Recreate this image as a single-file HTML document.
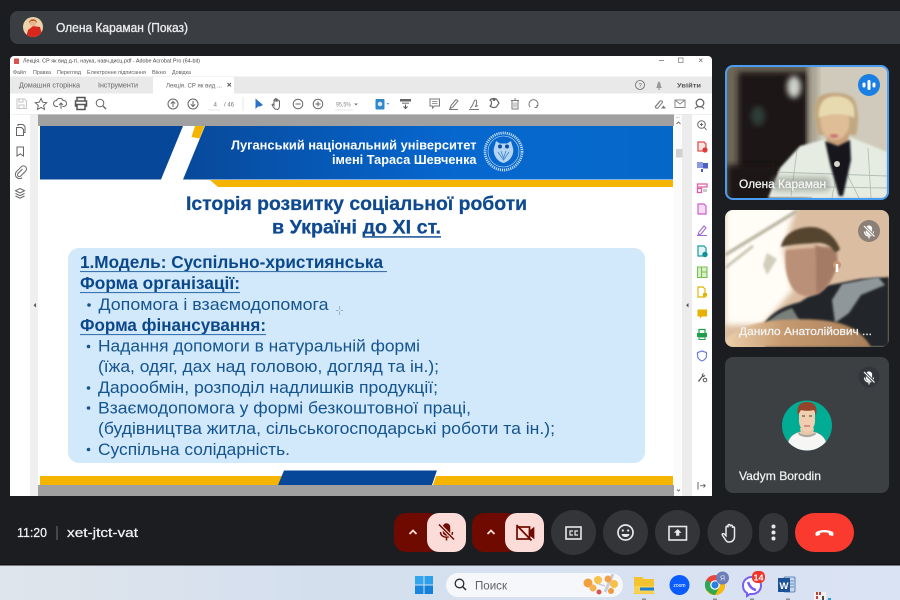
<!DOCTYPE html>
<html lang="uk">
<head>
<meta charset="utf-8">
<title>Google Meet</title>
<style>
html,body{margin:0;padding:0;width:900px;height:600px;overflow:hidden;background:#1c1d21}
svg{display:block;filter:blur(.3px)}
text{font-family:"Liberation Sans","Noto Sans CJK SC",sans-serif}
.b{font-weight:700}
.s{fill:#14548f}
.h{fill:#0a478b;font-weight:700}
.m{fill:#5c5c5c;font-size:5.6px}
.w{fill:#fff}
.ic{fill:none;stroke:#666;stroke-width:1}
</style>
</head>
<body>
<svg width="900" height="600" viewBox="0 0 900 600" xmlns="http://www.w3.org/2000/svg">
<defs>
<filter id="b1" x="-30%" y="-30%" width="160%" height="160%"><feGaussianBlur stdDeviation="1"/></filter>
<filter id="b3" x="-30%" y="-30%" width="160%" height="160%"><feGaussianBlur stdDeviation="3"/></filter>
<filter id="b6" x="-50%" y="-50%" width="200%" height="200%"><feGaussianBlur stdDeviation="6"/></filter>
<clipPath id="t1"><rect x="727" y="67" width="160" height="131" rx="6"/></clipPath>
<clipPath id="t2"><rect x="725" y="210" width="164" height="137" rx="8"/></clipPath>
<clipPath id="av"><circle cx="807" cy="425.500" r="25"/></clipPath>
<clipPath id="av0"><circle cx="33" cy="27" r="10"/></clipPath>
<linearGradient id="hd" x1="0" x2="1" y1="0" y2="0"><stop offset="0" stop-color="#07499a"/><stop offset=".55" stop-color="#0667cf"/><stop offset="1" stop-color="#0568c8"/></linearGradient>
<linearGradient id="tb" x1="0" x2="1" y1="0" y2="0"><stop offset="0" stop-color="#dfe5ec"/><stop offset=".35" stop-color="#d4dfee"/><stop offset="1" stop-color="#dae3f3"/></linearGradient>
<linearGradient id="arm" x1="0" x2="1" y1="0" y2="0"><stop offset="0" stop-color="#ecd0ab"/><stop offset=".4" stop-color="#c69a70"/><stop offset="1" stop-color="#a97f5a"/></linearGradient>
</defs>

<rect width="900" height="600" fill="#1c1d21"/>

<!-- top bar -->
<rect x="10" y="11" width="900" height="33" rx="8" fill="#3a3d41"/>
<circle cx="33" cy="27" r="10" fill="#ecd3ac"/>
<g clip-path="url(#av0)"><path d="M26 38l2-8 5-4 7 1 3 11z" fill="#d8281e"/><circle cx="33" cy="23" r="3.400" fill="#e9b58b"/><path d="M29 23c0-5 8-5 8 0l-2-2h-4z" fill="#b3562a"/></g>
<text x="56" y="32" font-size="12.600" fill="#e9eaec" stroke="#e9eaec" stroke-width=".35" textLength="132" lengthAdjust="spacingAndGlyphs">Олена Караман (Показ)</text>

<!-- PDF window -->
<rect x="10" y="56" width="702" height="440" rx="4" fill="#fff"/>
<rect x="10" y="76.500" width="702" height="17" fill="#e9e9e9"/>
<path d="M153 93.500V79a2 2 0 0 1 2-2h77a2 2 0 0 1 2 2v14.500z" fill="#fff"/>
<rect x="10" y="93.500" width="702" height="21" fill="#fff"/>
<line x1="10" y1="114.500" x2="712" y2="114.500" stroke="#ddd" stroke-width=".8"/>
<path d="M14 58.500h5v5.500h-5z" fill="#d8534c"/>
<text x="23" y="62.500" font-size="5.600" fill="#444" textLength="177" lengthAdjust="spacingAndGlyphs">Лекція. СР як вид д-ті, наука, навч.дисц.pdf - Adobe Acrobat Pro (64-bit)</text>
<path d="M659 60.500h5" stroke="#777" stroke-width=".8"/>
<rect x="678.500" y="58" width="4.500" height="4.500" fill="none" stroke="#888" stroke-width=".8"/>
<path d="M699 58.500l3.500 3.500m0-3.500L699 62" stroke="#777" stroke-width=".8"/>
<text x="13" y="74" class="m" textLength="13" lengthAdjust="spacingAndGlyphs">Файл</text>
<text x="33" y="74" class="m" textLength="18" lengthAdjust="spacingAndGlyphs">Правка</text>
<text x="57" y="74" class="m" textLength="24" lengthAdjust="spacingAndGlyphs">Перегляд</text>
<text x="87" y="74" class="m" textLength="59" lengthAdjust="spacingAndGlyphs">Електронне підписання</text>
<text x="152" y="74" class="m" textLength="14" lengthAdjust="spacingAndGlyphs">Вікно</text>
<text x="172" y="74" class="m" textLength="19" lengthAdjust="spacingAndGlyphs">Довідка</text>
<text x="19" y="87.500" font-size="7" fill="#666" textLength="61" lengthAdjust="spacingAndGlyphs">Домашня сторінка</text>
<text x="98" y="87.500" font-size="7" fill="#666" textLength="40" lengthAdjust="spacingAndGlyphs">Інструменти</text>
<text x="166" y="87.500" font-size="6.200" fill="#666" textLength="56" lengthAdjust="spacingAndGlyphs">Лекція. СР як вид ...</text>
<path d="M227.500 83l3.500 3.500m0-3.500l-3.500 3.500" stroke="#555" stroke-width=".9"/>
<circle cx="640" cy="85" r="4.500" fill="none" stroke="#666" stroke-width=".8"/>
<text x="638.500" y="87.300" font-size="6" fill="#666">?</text>
<path d="M656 88c1.500-1 1-6 3-6.500c2 .5 1.500 5.500 3 6.500zM658 88.500h2v1.200h-2z" fill="#999"/>
<text x="677" y="87.500" font-size="6.800" class="b" fill="#555" textLength="24" lengthAdjust="spacingAndGlyphs">Увійти</text>

<!-- toolbar icons -->
<g class="ic">
<path d="M17 99h7.500l2 2v7.500h-9.500z" stroke="#c5c5c5"/><path d="M19 99v3h4v-3M19 108.500v-3.500h5v3.500" stroke="#c5c5c5"/>
<path d="M41 98.500l1.700 3.700 4 .5-3 2.700.8 4-3.500-2-3.500 2 .8-4-3-2.700 4-.5z"/>
<path d="M58 106.500h-1.500a3 3 0 0 1 0-6c.8-2.700 5.500-3 6.500 0a3 3 0 0 1 1 6h-1.500M61 109v-6m-2 2l2-2 2 2"/>
<path d="M77 101v-3.500h8v3.500M77 106h-1.500v-5h11v5H85M77 104.500h8v5h-8z" stroke-width="1.500" stroke="#555"/>
<circle cx="100" cy="103" r="3.800"/><path d="M103 106l3 3" stroke-width="1.400"/>
<circle cx="173" cy="104" r="5"/><path d="M173 107v-5.500m-2.200 2.200l2.200-2.200 2.200 2.200"/>
<circle cx="193" cy="104" r="5"/><path d="M193 101v5.500m-2.200-2.200l2.200 2.200 2.200-2.200"/>
<circle cx="298" cy="104" r="4.800"/><path d="M295.500 104h5"/>
<circle cx="318" cy="104" r="4.800"/><path d="M315.500 104h5m-2.500-2.500v5"/>
<path d="M275 109c-1.500-1.500-2.500-3-3-4.500.5-1 1.500 0 2 .8v-5.500c1-.7 1.200 0 1.200 2v-3c1-.7 1.300 0 1.300 3v-2.500c1-.6 1.300 0 1.300 2.500v-1.500c1-.5 1.700 0 1.700 1.500v4c0 1.500-.5 3-2 3.700z"/>
<path d="M430 99h9.500v7h-5l-2 2v-2H430z" stroke="#777"/><path d="M432 101.500h5.500M432 103.500h5.500" stroke="#999"/>
<path d="M450 108.500l1-3 5-6 2 1.500-5 6zM449 109.500h9" stroke="#777"/>
<path d="M470 108c3-1 3.500-8 5.500-8s1 5 0 6.500c1 0 1.500-1.500 2.500-.5M469 109.500h10" stroke="#777"/>
<path d="M490 100c2-2 6-2 7 0l2 3-2 3c-1 2-5 2-7 0 2-1 2-5 0-6z" stroke="#666" stroke-width="1.200"/><circle cx="494" cy="99.500" r="1.500" fill="#666" stroke="none"/>
<path d="M511 100.500h8m-7 0v8.500h6v-8.500m-4-1.500h2" stroke="#777"/><path d="M514 102.500v5m2-5v5" stroke="#777" stroke-width=".7"/>
<path d="M530 107a4.500 4.500 0 1 1 7 0M537 107.500v-2.500m0 2.500h-2.500" stroke="#777"/>
<path d="M655 107l5-6c2-1 3 1 2 2l-4 5c-2 1-3-.5-2-2l3.500-4" stroke="#777"/><path d="M661 108.500l2.500-3 2.500 3z" fill="#777" stroke="none"/>
<rect x="675" y="100" width="10" height="7.500" stroke="#888"/><path d="M675 100l5 4 5-4" stroke="#888"/>
<circle cx="700" cy="103" r="3.800" stroke="#666" stroke-width="1.300"/><path d="M695 109c1-3 8-3 9 0" stroke="#666"/>
</g>
<line x1="243" y1="97" x2="243" y2="111" stroke="#e2e2e2" stroke-width=".8"/>
<text x="213.500" y="106.500" font-size="6.200" fill="#777">4</text>
<path d="M208 110h12" stroke="#ddd" stroke-width=".7"/>
<text x="224" y="106.500" font-size="6.200" fill="#777" textLength="10" lengthAdjust="spacingAndGlyphs">/ 46</text>
<path d="M255.500 98.500v10.500l2.500-2.500 2 0 3-1.500z" fill="#2b73c5"/>
<text x="336" y="106.500" font-size="6" fill="#888" textLength="15" lengthAdjust="spacingAndGlyphs">95,5%</text>
<path d="M354 103.500l2 2 2-2" fill="#777"/>
<path d="M335 110h18" stroke="#ddd" stroke-width=".7"/>
<rect x="375.500" y="99" width="9" height="10.500" rx="1" fill="#2e87c9"/><circle cx="380" cy="104" r="2.300" fill="#cfe6f5"/>
<path d="M386.500 103.300l1.500 1.500 1.500-1.500z" fill="#2e87c9"/>
<path d="M400 99h11v2.500h-11z" fill="#666"/><path d="M402 102.500h7v1.500h-7z" fill="#999"/><path d="M405.500 104.500v3.500m-2-1.500l2 2 2-2" stroke="#555" fill="none"/>

<!-- left panel -->
<rect x="10" y="114.500" width="20" height="381.500" fill="#fff"/>
<rect x="30" y="114.500" width="8" height="381.500" fill="#efefef"/>
<g class="ic">
<path d="M16.500 127.500h5l2 2v6h-7zM18 126v-1.500h5l2 2v6h-1.500" stroke="#666"/>
<path d="M17 147h6.500v9l-3.250-2.200L17 156z" stroke="#666"/>
<path d="M22.500 169l-4.500 4.500a1.800 1.800 0 0 0 2.600 2.600l5-5a3 3 0 0 0-4.300-4.300l-5 5a4.200 4.200 0 0 0 5.900 5.900" stroke="#666"/>
<path d="M20 188.500l4.500 2.200-4.500 2.200-4.500-2.200zM15.500 193.500l4.500 2.200 4.500-2.200M15.500 196l4.500 2.200 4.500-2.200" stroke="#666"/>
</g>
<path d="M36 303v4.500l-2.500-2.250z" fill="#555"/>

<!-- grey areas + page -->
<rect x="38" y="114.500" width="637" height="11.500" fill="#a0a0a0"/>
<rect x="38" y="126" width="636" height="359" fill="#fff"/>
<rect x="38" y="485" width="637" height="11" fill="#a0a0a0"/>

<!-- slide header -->
<path d="M40 126h143l-22 53.500H40z" fill="#07479a"/>
<path d="M205 126L183 179.500h490V126z" fill="url(#hd)"/>
<path d="M195 126h9.500l-5 12.500-8-1.500z" fill="#f5b400"/>
<path d="M210 180h463v7H218z" fill="#f5b400"/>
<text x="231" y="149.500" font-size="13" class="b w" textLength="245.500" lengthAdjust="spacingAndGlyphs">Луганський національний університет</text>
<text x="332" y="164" font-size="13" class="b w" textLength="144.500" lengthAdjust="spacingAndGlyphs">імені Тараса Шевченка</text>
<g>
<circle cx="503.500" cy="151.500" r="18.500" fill="none" stroke="#bcd8f2" stroke-width="2.800" stroke-dasharray="1.200 .9"/>
<circle cx="503.500" cy="151.500" r="15.500" fill="none" stroke="#d5e7f7" stroke-width=".6"/>
<path d="M496 141l4 2.500h7l4-2.500c1.500 6 3 8 2 12-1 5-5 9-9.500 10-4.500-1-8.500-5-9.500-10-1-4 .5-6 2-12z" fill="#b4d4f1"/>
<circle cx="500" cy="146.500" r="2" fill="#0a4f9f"/><circle cx="507" cy="146.500" r="2" fill="#0a4f9f"/>
<path d="M498 152l5.500 8 5.500-8M501 151l2.500 7 2.500-7" stroke="#3f86cc" stroke-width=".8" fill="none"/>
</g>

<!-- title -->
<text x="186" y="210" font-size="19" class="h" textLength="341" lengthAdjust="spacingAndGlyphs" stroke="#0f4a90" stroke-width=".25" style="fill:#0f4a90">Історія розвитку соціальної роботи</text>
<text x="272" y="233.500" font-size="19" class="h" textLength="169" lengthAdjust="spacingAndGlyphs" stroke="#0f4a90" stroke-width=".25" style="fill:#0f4a90">в Україні до ХІ ст.</text>
<rect x="364" y="236" width="77" height="1.800" fill="#3a6ea5"/>

<!-- blue box -->
<rect x="68" y="248" width="577" height="215" rx="11" fill="#d2e8fb"/>
<text x="80" y="268" font-size="17.500" class="h" textLength="303" lengthAdjust="spacingAndGlyphs">1.Модель: Суспільно-християнська</text>
<rect x="80" y="271" width="307" height="1.100" fill="#3b74ad"/>
<text x="80" y="289" font-size="17.500" class="h" textLength="160" lengthAdjust="spacingAndGlyphs">Форма організації:</text>
<rect x="80" y="292" width="160" height="1.100" fill="#3b74ad"/>
<circle cx="89" cy="305" r="1.800" fill="#14548f"/>
<text x="98.500" y="310" font-size="17" class="s" textLength="230" lengthAdjust="spacingAndGlyphs">Допомога і взаємодопомога</text>
<text x="80" y="331" font-size="17.500" class="h" textLength="186" lengthAdjust="spacingAndGlyphs">Форма фінансування:</text>
<rect x="80" y="334" width="186" height="1.100" fill="#3b74ad"/>
<circle cx="88.500" cy="346.500" r="1.800" fill="#14548f"/>
<text x="98" y="351.500" font-size="17" class="s" textLength="322" lengthAdjust="spacingAndGlyphs">Надання допомоги в натуральній формі</text>
<text x="98" y="372" font-size="17" class="s" textLength="341" lengthAdjust="spacingAndGlyphs">(їжа, одяг, дах над головою, догляд та ін.);</text>
<circle cx="88.500" cy="388" r="1.800" fill="#14548f"/>
<text x="98" y="393" font-size="17" class="s" textLength="340" lengthAdjust="spacingAndGlyphs">Дарообмін, розподіл надлишків продукції;</text>
<circle cx="88.500" cy="408" r="1.800" fill="#14548f"/>
<text x="98" y="413.500" font-size="17" class="s" textLength="373" lengthAdjust="spacingAndGlyphs">Взаємодопомога у формі безкоштовної праці,</text>
<text x="98" y="434" font-size="17" class="s" textLength="457" lengthAdjust="spacingAndGlyphs">(будівництва житла, сільськогосподарські роботи та ін.);</text>
<circle cx="88.500" cy="449.500" r="1.800" fill="#14548f"/>
<text x="98" y="455" font-size="17" class="s" textLength="192" lengthAdjust="spacingAndGlyphs">Суспільна солідарність.</text>
<path d="M339.500 306v3.500M339.500 311.500v3.500M336 310.500h2.500M340.500 310.500h2.500" stroke="#8a9ba8" stroke-width=".7"/>

<!-- slide footer -->
<rect x="40" y="476" width="633" height="9" fill="#f5b400"/>
<path d="M284 470.500h153l-5 14.500H278z" fill="#07479a"/>
<path d="M432 485l5-14.500h1L433 485z" fill="#fff"/>

<!-- scrollbar + right tools -->
<rect x="674" y="114.500" width="8" height="381.500" fill="#fbfbfb"/>
<rect x="682" y="114.500" width="10" height="381.500" fill="#ececec"/>
<rect x="692" y="114.500" width="20" height="381.500" fill="#fff"/>
<path d="M676 117h4v.8h-4z" fill="#ccc"/>
<path d="M676.500 124l2-2 2 2" fill="none" stroke="#555" stroke-width=".8"/>
<rect x="676" y="149" width="6.500" height="8.500" fill="#d0d0d0"/>
<path d="M677 489.500l1.500 1.500 1.500-1.500" fill="none" stroke="#555" stroke-width=".8"/>
<path d="M688.500 303v4.500l-2.500-2.250z" fill="#555"/>

<circle cx="701.500" cy="124.500" r="3.800" fill="none" stroke="#666" stroke-width="1"/><path d="M704.500 127.500l2 2.500M700 124.500h3M701.500 123v3" stroke="#666" stroke-width="1"/>
<path d="M698 142h6l2 2v7h-8z" fill="#fde4e3" stroke="#e0524f" stroke-width="1.300"/><circle cx="705" cy="150" r="2.600" fill="#e03a37"/>
<rect x="697" y="162" width="6" height="6" fill="#8b9be0"/><rect x="703" y="163" width="5" height="5.500" fill="#4b5fc5"/><path d="M702 169v3" stroke="#4b5fc5" stroke-width="2"/>
<path d="M697.500 184h9.500v3h-9.500zM697.500 188.500h4v4h-4z" fill="none" stroke="#e25aa0" stroke-width="1.300"/><rect x="703" y="189" width="4" height="3" fill="#c9c9c9"/>
<path d="M698 204h6l2 2v8h-8z" fill="#f5dcf5" stroke="#cc5fcc" stroke-width="1.200"/>
<path d="M698 235l1-3 5-6 2 2-5 6zM697 235.500h10" fill="none" stroke="#a06bd6" stroke-width="1.100"/>
<path d="M698 246h6l2 2v8h-8z" fill="#e2f3f3" stroke="#1b9aa0" stroke-width="1.200"/><circle cx="705" cy="254.500" r="2.700" fill="#11909a"/>
<path d="M697.500 267h9.500v10.500h-9.500zM701.500 267v10.500M701.500 272h5.500" fill="#d9efc5" stroke="#74bf4f" stroke-width="1.100"/>
<path d="M698 287h5l2 2v8h-7z" fill="none" stroke="#e2b500" stroke-width="1.200"/><rect x="703" y="293" width="4" height="3.500" fill="#e2b500"/>
<path d="M697.500 309.500h9.500v7h-5l-2 2v-2h-2.500z" fill="#e8b100"/>
<path d="M699 333v-3.500h6v3.500" fill="none" stroke="#1f9d4b" stroke-width="1.200"/><rect x="697" y="333" width="10" height="4" fill="#1f9d4b"/><rect x="699" y="337" width="6" height="2.500" fill="none" stroke="#1f9d4b"/>
<path d="M702 351l4.500 1.500v3c0 3-2 4.500-4.500 5.500-2.500-1-4.500-2.500-4.500-5.500v-3z" fill="none" stroke="#6c7fd9" stroke-width="1.200"/>
<path d="M698 381l4-5c-.5-1.500.5-3 2-2.500l-1.200 1.300 1 1 1.200-1c.5 1.500-1 2.500-2.500 2.200l-3.500 5z" fill="#555"/><circle cx="705" cy="380" r="1.800" fill="none" stroke="#555"/>
<path d="M698 482v7.500" stroke="#666" stroke-width="1"/><path d="M700 485.700h5m-1.500-1.800l1.800 1.800-1.800 1.800" fill="none" stroke="#666" stroke-width=".9"/>

<rect x="10" y="496" width="702" height="1" fill="#1c1d21"/>

<!-- Tile 1 -->
<rect x="725" y="65" width="164" height="135" rx="8" fill="#4a9cf0"/>
<g clip-path="url(#t1)">
<rect x="727" y="67" width="160" height="131" fill="#cfcabb"/>
<rect x="727" y="67" width="85" height="131" fill="#6e6757"/>
<rect x="738" y="72" width="70" height="130" fill="#1d1915" filter="url(#b3)"/>
<rect x="727" y="165" width="50" height="40" fill="#1d1915" filter="url(#b3)"/>
<rect x="808" y="60" width="10" height="90" fill="#a9a393" filter="url(#b3)"/>
<ellipse cx="794" cy="87" rx="7" ry="11" fill="#cfd2cb" filter="url(#b3)"/>
<ellipse cx="758" cy="116" rx="7" ry="10" fill="#2f3c38" filter="url(#b3)"/>
<path d="M817 98c8-7 28-7 36 0 6 8 6 26 3 37l-38 0c-4-12-5-28-1-37z" fill="#c2a881" filter="url(#b1)"/>
<path d="M827 128h20l3 16-12 8-12-8z" fill="#c79f7a" filter="url(#b1)"/>
<path d="M768 198l12-30 20-22 26-7 12 26 12-28 20 8 17 7v46z" fill="#e6ece2" filter="url(#b1)"/>
<path d="M777 172l110 4M771 186l116 2M797 150l-6 46M868 148l3 50M838 165l-6 33M845 170l14 28" stroke="#99a898" stroke-width=".9" fill="none" opacity=".65"/>
<path d="M825 141l13 5 12-6 1 20-8 36h-4l-9-32z" fill="#14131a" filter="url(#b1)"/>
<ellipse cx="835" cy="122" rx="14.500" ry="18" fill="#dfbd96" filter="url(#b1)"/>
<path d="M819 118c-1-9 2-17 8-20 7-3 17-2 22 2 5 4 6 10 5 18-8-5-26-5-35 0z" fill="#e8dab0" filter="url(#b1)"/>
<ellipse cx="834" cy="136" rx="4.500" ry="1.800" fill="#c76f73" filter="url(#b1)"/>
<circle cx="837" cy="164" r="3" fill="#d9d5c8"/>
<rect x="772" y="177" width="58" height="14" rx="4" fill="#7f8479" opacity=".55" filter="url(#b3)"/>
</g>
<circle cx="869" cy="85" r="11" fill="#1a7fe3"/>
<rect x="862.500" y="82.500" width="3" height="5" rx="1.500" fill="#fff"/><rect x="867.500" y="80" width="3" height="10" rx="1.500" fill="#fff"/><rect x="872.500" y="82.500" width="3" height="5" rx="1.500" fill="#fff"/>
<text x="739" y="188" font-size="11.500" fill="#f6f6f6" stroke="#f6f6f6" stroke-width=".25" textLength="87" lengthAdjust="spacingAndGlyphs">Олена Караман</text>

<!-- Tile 2 -->
<g clip-path="url(#t2)">
<rect x="725" y="210" width="164" height="137" fill="#dbbda2"/>
<path d="M725 205h72l-14 45 10 40-30 35h-38z" fill="#fffdf5" filter="url(#b3)"/>
<path d="M725 255l72-44" stroke="#bcb8a6" stroke-width="3.500" filter="url(#b1)"/>
<path d="M725 268l28-22" stroke="#c9c6b5" stroke-width="3" filter="url(#b1)"/>
<path d="M767 253l-4 12 4 10 10-16z" fill="#d2cebc" filter="url(#b1)"/>
<path d="M765 322c10-12 20-16 35-20l25-16 35-7 29-2v70H765z" fill="#23262c" filter="url(#b1)"/>
<path d="M762 328c8-10 18-16 30-20l12 20z" fill="#7a807c" filter="url(#b1)"/>
<path d="M832 300l10-16 36-7 7 8-24 10-12 18-14 10z" fill="#8f979a" filter="url(#b1)"/>
<path d="M786 250c-2 14 0 30 8 40 6 7 16 8 24 4 10-6 17-18 19-30 1-8 0-14-2-18z" fill="#bb9078" filter="url(#b1)"/>
<path d="M815 245c10 4 18 5 20 2l2 14c-2 14-10 28-20 33-2-16 0-34-2-49z" fill="#a47c66" filter="url(#b1)"/>
<path d="M781 247c2-12 14-20 30-20 13 0 24 9 29 22-4 5-6 3-8-1-5-4-10-6-17-5-12 1-22 1-34 4z" fill="#55452f" filter="url(#b1)"/>
<circle cx="837" cy="265" r="4" fill="#c59474"/><path d="M837 264v8" stroke="#fff" stroke-width="2.500"/>
<path d="M725 347v-7c12-12 30-18 55-20 30-2 62-1 78 12 6 5 10 10 13 15z" fill="url(#arm)" filter="url(#b1)"/>
</g>
<circle cx="869" cy="231" r="11" fill="#8b7f76"/>
<g stroke="#fff" fill="none" stroke-width="1.200"><path d="M866.500 228.500a2.500 2.500 0 0 1 5 0v3.500a2.500 2.500 0 0 1-5 0z" fill="#fff"/><path d="M864.500 231.500c0 6 9 6 9 0M869 236.500v2"/><path d="M863.500 225.500l11 11" stroke="#8b7f76" stroke-width="3"/><path d="M864 226l10.500 10.500"/></g>
<text x="739" y="335" font-size="11.200" fill="#f2f2f2" stroke="#f2f2f2" stroke-width=".25" textLength="133" lengthAdjust="spacingAndGlyphs">Данило Анатолійович ...</text>

<!-- Tile 3 -->
<rect x="725" y="357" width="164" height="136" rx="8" fill="#3c4043"/>
<circle cx="869" cy="377" r="10.500" fill="#33363a"/>
<g stroke="#fff" fill="none" stroke-width="1.200"><path d="M866.500 374.500a2.500 2.500 0 0 1 5 0v3.500a2.500 2.500 0 0 1-5 0z" fill="#fff"/><path d="M864.500 377.500c0 6 9 6 9 0M869 382.500v2"/><path d="M863.500 371.500l11 11" stroke="#33363a" stroke-width="3"/><path d="M864 372l10.500 10.500"/></g>
<circle cx="807" cy="425.500" r="25" fill="#00ac94"/>
<g clip-path="url(#av)">
<path d="M787 452c0-12 3-17 12-20h16c9 3 12 8 13 20z" fill="#f6f6f4" stroke="#8a8a8a" stroke-width=".5"/>
<path d="M800 428h14l-1 7c-3 3-9 3-12 0z" fill="#e9c7a9"/><path d="M799 432c3 4 13 4 16 0l1 2c-4 4-14 4-18 0z" fill="#a9a9a0"/>
<path d="M799 410c0-6 16-6 16 0v12c-1 7-5 10-8 10s-7-3-8-10z" fill="#f0cfb0"/>
<path d="M798 415c-2-9 2-13 9-13s11 4 9 13l-2-5c-4 1-9 1-13 0z" fill="#94442a"/>
<path d="M802 416h3M809 416h3" stroke="#4a3a30" stroke-width="1"/><path d="M804 426h6" stroke="#c7696a" stroke-width="1.300"/>
</g>
<text x="739" y="480" font-size="11.800" fill="#f1f1f1" stroke="#f1f1f1" stroke-width=".25" textLength="82" lengthAdjust="spacingAndGlyphs">Vadym Borodin</text>

<!-- bottom info -->
<text x="17" y="537" font-size="13" fill="#f1f1f1" stroke="#f1f1f1" stroke-width=".25" textLength="30" lengthAdjust="spacingAndGlyphs">11:20</text>
<rect x="56.500" y="526" width="1" height="14" fill="#6f7175"/>
<text x="67" y="537" font-size="13" fill="#f1f1f1" stroke="#f1f1f1" stroke-width=".25" textLength="71" lengthAdjust="spacingAndGlyphs">xet-jtct-vat</text>

<!-- controls -->
<rect x="394" y="513" width="46" height="39" rx="12" fill="#6e0a00"/>
<rect x="427" y="513" width="39" height="39" rx="12" fill="#fbdcd8"/>
<path d="M409.500 534l3.500-3.500 3.500 3.500" fill="none" stroke="#f6dcd8" stroke-width="1.800"/>
<g fill="none" stroke="#6e0a00" stroke-width="1.500"><path d="M443.500 527a3 3 0 0 1 6 0v5a3 3 0 0 1-6 0z" fill="#6e0a00"/><path d="M440.500 532c0 7 12 7 12 0M446.500 538v2.500"/><path d="M439 524.500l15 15" stroke="#fbdcd8" stroke-width="3.500"/><path d="M439 524.500l15 15"/></g>
<rect x="472" y="513" width="46" height="39" rx="12" fill="#6e0a00"/>
<rect x="505" y="513" width="39" height="39" rx="12" fill="#fbdcd8"/>
<path d="M487.500 534l3.500-3.500 3.500 3.500" fill="none" stroke="#f6dcd8" stroke-width="1.800"/>
<g fill="none" stroke="#6e0a00" stroke-width="1.700"><rect x="517" y="527" width="12.500" height="12"/><path d="M529.500 531.500l4-3v9l-4-3z" fill="#6e0a00"/><path d="M516.500 525l15 15.500"/></g>

<circle cx="573.500" cy="532.500" r="22.500" fill="#333538"/>
<rect x="566" y="527" width="15" height="12" fill="none" stroke="#e8e8e8" stroke-width="1.600"/>
<path d="M573 531h-3v4h3M578 531h-3v4h3" fill="none" stroke="#e8e8e8" stroke-width="1.200"/>
<circle cx="625.500" cy="532.500" r="22.500" fill="#333538"/>
<circle cx="625.500" cy="532.500" r="7.500" fill="none" stroke="#e8e8e8" stroke-width="1.700"/>
<circle cx="622.800" cy="530.500" r="1.100" fill="#e8e8e8"/><circle cx="628.200" cy="530.500" r="1.100" fill="#e8e8e8"/>
<path d="M621.500 534h8c-.5 4-7.500 4-8 0z" fill="#e8e8e8"/>
<circle cx="677.500" cy="532.500" r="22.500" fill="#333538"/>
<rect x="669" y="526.500" width="17.500" height="13.500" fill="none" stroke="#e8e8e8" stroke-width="1.600"/>
<path d="M677.700 529l3.800 3.800h-2.200v3h-3.200v-3h-2.200z" fill="#e8e8e8"/>
<circle cx="730" cy="532.500" r="22.500" fill="#333538"/>
<path d="M728 542c-2-.5-2.500-2.500-4-4.500-1-1.500-2.500-3-1.300-3.800 1.200-.7 2.300 1 3.300 2v-8.200c0-1.700 2-1.700 2 0v-1.700c0-1.700 2.200-1.700 2.200 0v.7c0-1.700 2.300-1.700 2.300 0v1.500c0-1.500 2-1.500 2 0v8.500c0 3.500-2.500 5.500-5 5.500z" fill="none" stroke="#e8e8e8" stroke-width="1.500"/>
<rect x="759" y="513" width="29" height="39" rx="14.500" fill="#333538"/>
<circle cx="773.500" cy="526.500" r="2" fill="#e8e8e8"/><circle cx="773.500" cy="532.500" r="2" fill="#e8e8e8"/><circle cx="773.500" cy="538.500" r="2" fill="#e8e8e8"/>
<rect x="795" y="513" width="59" height="39" rx="19.500" fill="#fa3a2e"/>
<path d="M815.500 534.500c0-1.500 0-2.500 1.500-3 5-2 10-2 15 0 1.500.5 1.500 1.500 1.500 3 0 1.200-.8 1.500-1.800 1.300l-2-.5c-1-.3-1-.9-1-2.300-2.500-.8-6-.8-8.500 0 0 1.400 0 2-1 2.300l-2 .5c-1 .2-1.700-.1-1.700-1.300z" fill="#fff"/>

<!-- taskbar -->
<rect x="0" y="565" width="900" height="35" fill="url(#tb)"/>
<rect x="0" y="564.500" width="900" height="1" fill="#0b0b0d"/>
<g>
<rect x="415" y="576" width="8.500" height="8.500" fill="#35a5ec"/><rect x="424.500" y="576" width="8.500" height="8.500" fill="#2da0ea"/><rect x="415" y="585.500" width="8.500" height="8.500" fill="#1b86dd"/><rect x="424.500" y="585.500" width="8.500" height="8.500" fill="#1580d8"/>
</g>
<rect x="446" y="573" width="177" height="24" rx="12" fill="#f5f7fb"/>
<circle cx="459.500" cy="583.500" r="4.300" fill="none" stroke="#2a2a2a" stroke-width="1.300"/><path d="M462.500 586.500l3.500 3.500" stroke="#2a2a2a" stroke-width="1.500"/>
<text x="475" y="589.500" font-size="11.500" fill="#5f6165" textLength="32" lengthAdjust="spacingAndGlyphs">Поиск</text>
<g>
<path d="M605 592l8-18" stroke="#c9cdd4" stroke-width="3"/><path d="M605 586l-9-3" stroke="#c9cdd4" stroke-width="1.500"/>
<circle cx="588" cy="583" r="4.500" fill="#f2a03d"/><circle cx="593" cy="588" r="3.500" fill="#f7b04b"/><circle cx="598" cy="580" r="4" fill="#f7c24b"/><circle cx="608" cy="579" r="3.500" fill="#f3a04a"/><circle cx="614" cy="584" r="4" fill="#f8be4a"/><circle cx="611" cy="591" r="3" fill="#f09a3a"/><circle cx="599" cy="592" r="2.500" fill="#d9534f"/>
</g>
<path d="M634 577h8l2 2h10v15h-20z" fill="#f4c430"/><rect x="634" y="586" width="20" height="7.500" fill="#f8d253"/><rect x="640" y="587.500" width="14" height="3" fill="#1b80d3"/>
<rect x="642" y="598.500" width="4" height="1.500" fill="#8b8f96"/>
<circle cx="679.500" cy="585" r="10" fill="#0b5cff"/>
<text x="679.500" y="586.800" font-size="5" fill="#fff" text-anchor="middle">zoom</text>
<circle cx="715" cy="585" r="10" fill="#e8453c"/>
<path d="M706 590a10 10 0 0 0 9 5 10 10 0 0 0 10-10c0-1.500-.4-3-1-4.200l-9 4.200z" fill="#f9bb05"/>
<path d="M706.300 580a10 10 0 0 0 0 10l4.200 3.500a10 10 0 0 0 4.500 1.500l4.500-8-4.500-2z" fill="#30a853"/>
<circle cx="715" cy="585" r="4.800" fill="#fff"/><circle cx="715" cy="585" r="3.600" fill="#2a7de1"/>
<circle cx="722.500" cy="578" r="6.500" fill="#6d7db8"/><text x="722.500" y="580.500" font-size="7" fill="#e5e9f5" text-anchor="middle">Я</text>
<rect x="713" y="598.500" width="4" height="1.500" fill="#8b8f96"/>
<path d="M752 577c5 0 9 3.500 9 8.500s-4 8.500-9 8.500h-2l-3 2v-3c-3-1.500-4-4.500-4-7.500 0-5 4-8.500 9-8.500z" fill="#fff" stroke="#7360f2" stroke-width="2"/>
<path d="M748 582c2 5 4 7 8 8" stroke="#7360f2" stroke-width="2.500" fill="none"/>
<rect x="752" y="571" width="13" height="12" rx="5" fill="#f0352b"/>
<text x="758.500" y="580.500" font-size="8.500" class="b w" text-anchor="middle" textLength="10" lengthAdjust="spacingAndGlyphs">14</text>
<rect x="750" y="598.500" width="4" height="1.500" fill="#8b8f96"/>
<rect x="784" y="577" width="11" height="15" rx="1" fill="#c7d8ee" stroke="#3f6da8" stroke-width=".8"/>
<path d="M787 581h7M787 584h7M787 587h7" stroke="#4675b0" stroke-width=".8"/>
<rect x="778" y="578" width="12" height="14" fill="#1f5197"/>
<text x="784" y="589" font-size="9.500" class="b w" text-anchor="middle">W</text>
<rect x="786" y="598.500" width="4" height="1.500" fill="#8b8f96"/>
<rect x="814" y="592" width="12" height="8" fill="#f1f1f1"/><path d="M816 592h2v3h-2zM819 592h2v3h-2zM816 596h2v3h-2z" fill="#b5473d"/><rect x="822" y="596" width="2" height="4" fill="#4a4a4a"/><rect x="828" y="598" width="3" height="2" fill="#2b9ed8"/>
</svg>
</body>
</html>
